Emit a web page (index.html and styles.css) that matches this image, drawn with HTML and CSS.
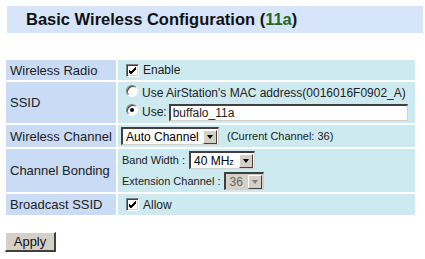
FILE: index.html
```html
<!DOCTYPE html>
<html lang="en">
<head>
  <meta charset="UTF-8" />
  <title>Basic Wireless Configuration</title>
  <link rel="stylesheet" href="styles.css">
</head>
<body>
  <div class="title">Basic Wireless Configuration (<span class="band">11a</span>)</div>

  <table class="config">
    <tr class="r-radio">
      <th>Wireless Radio</th>
      <td>
        <span class="check">
          <span class="box"><svg width="9" height="9" viewBox="0 0 9 9"><path d="M1 4 L3 6 L8 1 M1 5 L3 7 L8 2 M1 6 L3 8 L8 3" stroke="#000" stroke-width="1" fill="none"/></svg></span>
          Enable
        </span>
      </td>
    </tr>
    <tr class="r-ssid">
      <th>SSID</th>
      <td>
        <div class="opt">
          <span class="radio"></span>Use AirStation's MAC address(0016016F0902_A)
        </div>
        <div class="opt">
          <span class="radio on"></span>Use:<span class="text">buffalo_11a</span>
        </div>
      </td>
    </tr>
    <tr class="r-chan">
      <th>Wireless Channel</th>
      <td>
        <div class="line">
          <span class="select w-auto"><span class="val">Auto Channel</span><span class="arrow"></span></span>
          <span class="note">(Current Channel: 36)</span>
        </div>
      </td>
    </tr>
    <tr class="r-bond">
      <th>Channel Bonding</th>
      <td>
        <div class="line small">Band Width :
          <span class="select w-bw"><span class="val">40 MH<small>z</small></span><span class="arrow"></span></span>
        </div>
        <div class="line small">Extension Channel :
          <span class="select w-ext disabled"><span class="val">36</span><span class="arrow"></span></span>
        </div>
      </td>
    </tr>
    <tr class="r-bcast">
      <th>Broadcast SSID</th>
      <td>
        <span class="check">
          <span class="box"><svg width="9" height="9" viewBox="0 0 9 9"><path d="M1 4 L3 6 L8 1 M1 5 L3 7 L8 2 M1 6 L3 8 L8 3" stroke="#000" stroke-width="1" fill="none"/></svg></span>
          Allow
        </span>
      </td>
    </tr>
  </table>

  <button class="apply">Apply</button>
</body>
</html>
```

FILE: styles.css
```css
* {
  box-sizing: border-box;
}

body {
  margin: 0;
  font-family: "Liberation Sans", Arial, sans-serif;
  color: #222;
  background: #fff;
}

.title {
  margin: 6px 2px 0 7px;
  height: 27px;
  padding: 4px 0 0 19px;
  background: #d7e5fa;
  font-size: 16.5px;
  font-weight: bold;
  color: #111;
}

.band {
  color: #1f6a1f;
}

.config {
  margin: 25px 0 0 4px;
  width: 413px;
  border-collapse: separate;
  border-spacing: 2px;
  font-size: 12px;
}

.config th {
  width: 110px;
  padding: 0 0 0 4px;
  background: #c9dbf5;
  font-size: 13px;
  font-weight: normal;
  text-align: left;
  white-space: nowrap;
}

.config td {
  padding: 0 3px;
  background: #cdeaf0;
}

.r-radio th, .r-radio td { height: 20px; }
.r-ssid th, .r-ssid td { height: 41px; }
.r-chan th, .r-chan td { height: 22px; }
.r-bond th, .r-bond td { height: 43px; }
.r-bcast th, .r-bcast td { height: 21px; }

.check {
  display: flex;
  align-items: center;
  gap: 4px;
  padding-left: 5px;
}

.box {
  display: flex;
  align-items: center;
  justify-content: center;
  width: 13px;
  height: 13px;
  background: #fff;
  border-top: 1px solid #808080;
  border-left: 1px solid #808080;
  border-right: 1px solid #fff;
  border-bottom: 1px solid #fff;
  box-shadow: inset 1px 1px 0 #404040, inset -1px -1px 0 #d4d0c8;
}

.opt {
  display: flex;
  align-items: center;
  padding-left: 5px;
  height: 19px;
}

.radio {
  position: relative;
  width: 12px;
  height: 12px;
  margin: -4px 4px 0 0;
  border-radius: 50%;
  background: #fff;
  border: 1px solid;
  border-color: #808080 #fff #fff #808080;
  box-shadow: inset 1px 1px 0 #404040;
}

.radio.on::after {
  content: "";
  position: absolute;
  left: 3px;
  top: 3px;
  width: 4px;
  height: 4px;
  border-radius: 50%;
  background: #000;
}

.text {
  display: flex;
  align-items: center;
  width: 239px;
  height: 17px;
  margin-left: 2px;
  padding-left: 2px;
  background: #fff;
  border-top: 2px solid #404040;
  border-left: 2px solid #404040;
  border-right: 1px solid #d4d0c8;
  border-bottom: 1px solid #d4d0c8;
  font-size: 12px;
}

.line {
  display: flex;
  align-items: center;
  gap: 4px;
}

.line.small {
  font-size: 11px;
  height: 21px;
  padding-left: 1px;
}

.select {
  display: flex;
  align-items: center;
  justify-content: space-between;
  height: 18px;
  padding: 0 1px 0 3px;
  background: #fff;
  border-top: 2px solid #404040;
  border-left: 2px solid #404040;
  border-right: 1px solid #d4d0c8;
  border-bottom: 1px solid #d4d0c8;
  font-size: 12px;
  color: #000;
}

.select small {
  font-size: 9px;
}

.select.disabled {
  background: #d4d0c8;
  color: #666;
}

.w-auto { width: 98px; }
.w-bw { width: 66px; }
.w-ext { width: 40px; }

.arrow {
  position: relative;
  width: 14px;
  height: 14px;
  background: #d4d0c8;
  border-top: 1px solid #fff;
  border-left: 1px solid #fff;
  border-right: 1px solid #404040;
  border-bottom: 1px solid #404040;
}

.arrow::after {
  content: "";
  position: absolute;
  left: 3px;
  top: 4px;
  border-left: 3px solid transparent;
  border-right: 3px solid transparent;
  border-top: 4px solid #000;
}

.disabled .arrow::after {
  border-top-color: #808080;
}

.note {
  margin-left: 4px;
  font-size: 11px;
}

.apply {
  margin: 15px 0 0 5px;
  width: 51px;
  height: 20px;
  padding: 0;
  background: #d4d0c8;
  border-top: 1px solid #fff;
  border-left: 1px solid #fff;
  border-right: 2px solid #404040;
  border-bottom: 2px solid #404040;
  font-family: "Liberation Sans", Arial, sans-serif;
  font-size: 13px;
  color: #111;
}
```
